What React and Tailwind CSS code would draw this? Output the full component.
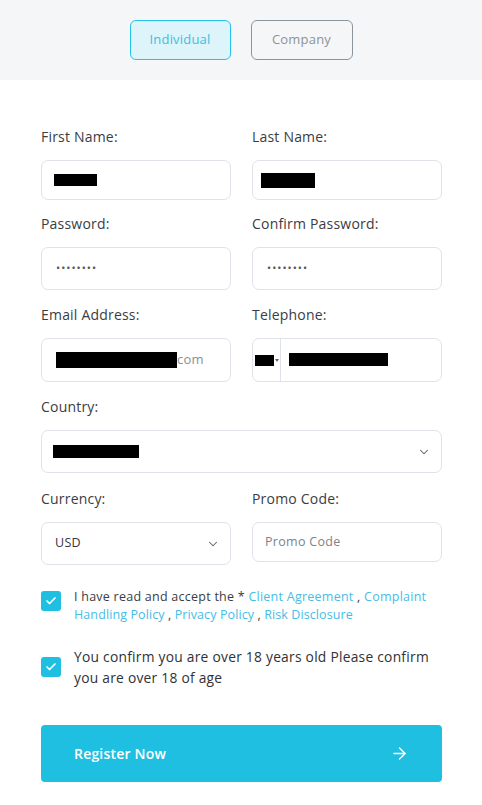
import React from "react";
import { ChevronDown, ArrowRight, Check } from "lucide-react";

const font = { fontFamily: '"Open Sans", "Liberation Sans", sans-serif' };

function Field({ label, children }) {
  return (
    <div className="flex flex-col">
      <label className="text-[14px] leading-5 tracking-[0.2px] text-[#3a3d42] mb-[13px]">{label}</label>
      {children}
    </div>
  );
}

function Box({ className = "", children }) {
  return (
    <div className={"flex items-center rounded-[7px] border border-[#dfe2e8] bg-white " + className}>
      {children}
    </div>
  );
}

function Redact({ w, h = 14 }) {
  return <span className="inline-block bg-black" style={{ width: w, height: h }} />;
}

function CheckBox() {
  return (
    <span className="flex h-5 w-5 shrink-0 items-center justify-center rounded-[3px] bg-[#1fbfe1]">
      <Check size={12} strokeWidth={3.5} className="text-white" />
    </span>
  );
}

export default function App() {
  return (
    <div className="min-h-[805px] bg-white" style={font}>
      {/* account type tabs */}
      <div className="flex h-20 items-center justify-center gap-5 bg-[#f5f6f7]">
        <button className="h-10 w-[101px] rounded-[6px] border border-[#22c3e6] bg-[#ddf4fb] text-[13px] font-medium tracking-[0.2px] text-[#3bbfe0]">
          Individual
        </button>
        <button className="h-10 w-[102px] rounded-[6px] border border-[#8a959e] bg-transparent text-[13px] font-medium tracking-[0.2px] text-[#8b939a]">
          Company
        </button>
      </div>

      <form className="px-[41px] pr-[40px] pt-[47px]">
        <div className="grid grid-cols-2 gap-x-[21px]">
          <Field label="First Name:">
            <Box className="h-10 pl-3">
              <Redact w={43} h={12} />
            </Box>
          </Field>
          <Field label="Last Name:">
            <Box className="h-10 pl-2">
              <Redact w={54} h={15} />
            </Box>
          </Field>
        </div>

        <div className="mt-[14px] grid grid-cols-2 gap-x-[21px]">
          <Field label="Password:">
            <Box className="h-[43px] pl-[14px] text-[11px] tracking-[1px] text-[#555]">••••••••</Box>
          </Field>
          <Field label="Confirm Password:">
            <Box className="h-[43px] pl-[14px] text-[11px] tracking-[1px] text-[#555]">••••••••</Box>
          </Field>
        </div>

        <div className="mt-[15px] grid grid-cols-2 gap-x-[21px]">
          <Field label="Email Address:">
            <Box className="h-11 pl-[14px]">
              <Redact w={121} h={16} />
              <span className="text-[13px] tracking-[0.2px] text-[#8a8f96]">com</span>
            </Box>
          </Field>
          <Field label="Telephone:">
            <Box className="h-11">
              <div className="flex h-full w-[28px] items-center border-r border-[#dfe2e8] pl-[2px]">
                <Redact w={19} h={11} />
                <span className="ml-[1px] h-0 w-0 border-x-[2px] border-t-[3px] border-x-transparent border-t-[#666]" />
              </div>
              <div className="ml-[8px]">
                <Redact w={99} h={13} />
              </div>
            </Box>
          </Field>
        </div>

        <div className="mt-[15px]">
          <Field label="Country:">
            <Box className="h-[43px] justify-between pl-[11px] pr-[10px]">
              <Redact w={86} h={13} />
              <ChevronDown size={14} strokeWidth={1.75} className="text-[#555c66]" />
            </Box>
          </Field>
        </div>

        <div className="mt-[16px] grid grid-cols-2 gap-x-[21px]">
          <Field label="Currency:">
            <Box className="h-[43px] justify-between pl-[13px] pr-[10px] text-[12.5px] tracking-[0.3px] text-[#33363b]">
              <span>USD</span>
              <ChevronDown size={14} strokeWidth={1.75} className="text-[#555c66]" />
            </Box>
          </Field>
          <Field label="Promo Code:">
            <Box className="h-10 pl-[12px] text-[12.5px] tracking-[0.3px] text-[#7c828a]">Promo Code</Box>
          </Field>
        </div>

        <div className="mt-[23px] flex items-start gap-[13px]">
          <div className="pt-[3px]">
            <CheckBox />
          </div>
          <div className="text-[12.5px] leading-[18px] tracking-[0.25px] text-[#3a3d42]">
            <div>
              I have read and accept the * <a className="text-[#45bde6]">Client Agreement</a> ,{" "}
              <a className="text-[#45bde6]">Complaint</a>
            </div>
            <div className="tracking-[0.1px]">
              <a className="text-[#45bde6]">Handling Policy</a> , <a className="text-[#45bde6]">Privacy Policy</a> ,{" "}
              <a className="text-[#45bde6]">Risk Disclosure</a>
            </div>
          </div>
        </div>

        <div className="mt-[22px] flex items-center gap-[13px]">
          <CheckBox />
          <p className="text-[13.8px] leading-[21px] tracking-[0.25px] text-[#2f3236]">
            You confirm you are over 18 years old Please confirm you are over 18 of age
          </p>
        </div>

        <button
          type="button"
          className="mt-[37px] flex h-[57px] w-full items-center justify-between rounded-[4px] bg-[#1fbfe1] pl-[33px] pr-[33px] text-[14px] font-semibold tracking-[0.2px] text-white"
        >
          <span>Register Now</span>
          <ArrowRight size={19} strokeWidth={1.75} />
        </button>
      </form>
    </div>
  );
}
